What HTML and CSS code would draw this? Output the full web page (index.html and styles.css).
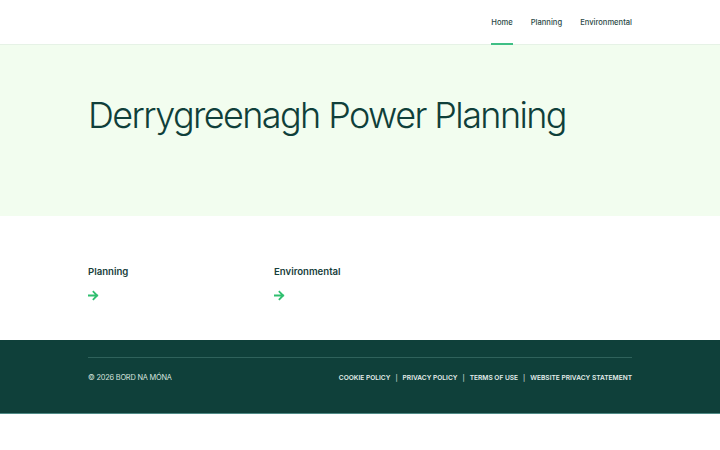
FILE: index.html
```html
<!DOCTYPE html>
<html lang="en">
<head>
<meta charset="utf-8">
<title>Derrygreenagh Power Planning</title>
<link rel="stylesheet" href="styles.css">
</head>
<body>
<header class="site-header">
  <div class="container header-inner">
    <nav class="main-nav">
      <a class="nav-link active" href="#">Home</a>
      <a class="nav-link" href="#">Planning</a>
      <a class="nav-link" href="#">Environmental</a>
    </nav>
  </div>
</header>
<section class="hero">
  <div class="container">
    <h1 class="hero-title">Derrygreenagh Power Planning</h1>
  </div>
</section>
<section class="cards">
  <div class="container cards-grid">
    <a class="card" href="#">
      <span class="card-title">Planning</span>
      <svg class="card-arrow" viewBox="0 0 12 12" width="11" height="11"><path d="M1 6h9M6 2l4 4-4 4" fill="none" stroke="#2fbf6f" stroke-width="2" stroke-linecap="square"/></svg>
    </a>
    <a class="card" href="#">
      <span class="card-title">Environmental</span>
      <svg class="card-arrow" viewBox="0 0 12 12" width="11" height="11"><path d="M1 6h9M6 2l4 4-4 4" fill="none" stroke="#2fbf6f" stroke-width="2" stroke-linecap="square"/></svg>
    </a>
  </div>
</section>
<footer class="site-footer">
  <div class="container footer-inner">
    <span class="copyright">© 2026 BORD NA MÓNA</span>
    <nav class="footer-links">
      <a href="#">COOKIE POLICY</a><span class="sep">|</span>
      <a href="#">PRIVACY POLICY</a><span class="sep">|</span>
      <a href="#">TERMS OF USE</a><span class="sep">|</span>
      <a href="#">WEBSITE PRIVACY STATEMENT</a>
    </nav>
  </div>
</footer>
</body>
</html>
```
FILE: styles.css
```css
* { box-sizing: border-box; }
html, body { margin: 0; padding: 0; background: #fff; }
body { font-family: "Inter", "Liberation Sans", sans-serif; color: #0f3f3a; }
a { text-decoration: none; color: inherit; }
.container { width: 544px; margin: 0 auto; }

.site-header { height: 45px; background: #fff; border-bottom: 1px solid #e6f2e6; }
.header-inner { height: 100%; display: flex; justify-content: flex-end; }
.main-nav { display: flex; gap: 18px; height: 100%; }
.nav-link { position: relative; display: flex; align-items: center; font-size: 7.6px; font-weight: 500; color: #2c4a46; height: 100%; padding-top: 1px; }
.nav-link.active::after { content: ""; position: absolute; left: 0; right: 0; bottom: -1px; height: 2px; background: #3fbf85; }

.hero { background: #f2fdef; height: 171px; }
.hero-title { margin: 0; padding-top: 48px; font-weight: 300; font-size: 36px; letter-spacing: -1.6px; color: #0f3f3a; line-height: 44px; }

.cards { height: 124px; padding-top: 50px; }
.cards-grid { display: grid; grid-template-columns: 186px 186px; }
.card { display: flex; flex-direction: column; gap: 13px; }
.card-title { font-size: 9.6px; font-weight: 600; color: #17403b; }
.card-arrow { display: block; }

.site-footer { background: #0f403a; height: 74px; padding-top: 17px; border-bottom: 1px solid #4f8a86; }
.footer-inner { border-top: 1px solid #2f625b; padding-top: 15px; display: flex; justify-content: space-between; align-items: center; }
.copyright { font-size: 7.4px; letter-spacing: -0.2px; color: #d7e3df; }
.footer-links { display: flex; align-items: center; font-size: 6.6px; font-weight: 600; color: #e4eeeb; }
.footer-links .sep { margin: 0 5px; font-weight: 400; }
```
